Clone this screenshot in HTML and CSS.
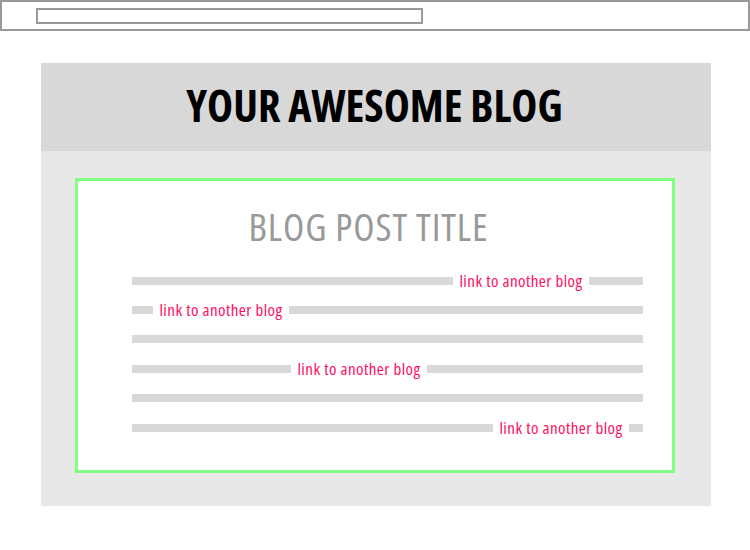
FILE: index.html
```html
<!DOCTYPE html>
<html>
<head>
<meta charset="utf-8">
<link rel="stylesheet" href="styles.css">
</head>
<body>
<div class="topbar"><div class="urlbox"></div></div>
<div class="page">
  <header class="masthead"><h1>YOUR AWESOME BLOG</h1></header>
  <main class="content">
    <article class="post">
      <h2>BLOG POST TITLE</h2>
      <div class="lines">
        <div class="row"><span class="seg" style="width:321px"></span><a class="link">link to another blog</a><span class="seg grow"></span></div>
        <div class="row"><span class="seg" style="width:21px"></span><a class="link">link to another blog</a><span class="seg grow"></span></div>
        <div class="row"><span class="seg grow"></span></div>
        <div class="row"><span class="seg" style="width:159px"></span><a class="link">link to another blog</a><span class="seg grow"></span></div>
        <div class="row"><span class="seg grow"></span></div>
        <div class="row"><span class="seg" style="width:361px"></span><a class="link">link to another blog</a><span class="seg grow"></span></div>
      </div>
    </article>
  </main>
</div>
</body>
</html>
```
FILE: styles.css
```css
* { box-sizing: border-box; }
html, body { margin: 0; padding: 0; background: #fff; }
body { width: 750px; height: 550px; overflow: hidden; font-family: "Open Sans", "Liberation Sans", sans-serif; }

.topbar {
  height: 31px;
  border: 2px solid #999;
  padding: 6px 0 0 34px;
}
.urlbox {
  width: 387px;
  height: 16px;
  border: 2px solid #999;
}

.page {
  margin: 32px 0 0 41px;
  width: 670px;
}
.masthead {
  background: #d8d8d8;
  height: 88px;
  display: flex;
  align-items: center;
  justify-content: center;
}
.masthead h1 {
  margin: 0;
  font-size: 44px;
  font-weight: 700;
  font-stretch: 75%;
  color: #000;
  line-height: 50px;
  padding-right: 3px;
  position: relative;
  top: -2px;
}
.content {
  background: #e8e8e8;
  height: 355px;
  padding: 27px 0 0 34px;
}
.post {
  width: 600px;
  height: 295px;
  background: #fff;
  border: 3px solid #80ff80;
  padding: 19px 0 0 54px;
}
.post h2 {
  margin: 0;
  width: 511px;
  padding-right: 38px;
  text-align: center;
  font-size: 39px;
  font-weight: 400;
  font-stretch: 75%;
  letter-spacing: 0.9px;
  color: #999;
  line-height: 52px;
}
.lines {
  margin-top: 14px;
  width: 511px;
  display: flex;
  flex-direction: column;
}
.row {
  height: 29.4px;
  display: flex;
  align-items: center;
}
.seg {
  height: 8px;
  background: #d8d8d8;
  flex: none;
}
.seg.grow { flex: 1; }
.link {
  margin: 0 6px;
  color: #ff0f5f;
  font-size: 17px;
  font-stretch: 75%;
  font-weight: 500;
  letter-spacing: 0.45px;
  line-height: 20px;
  white-space: nowrap;
  width: 124px;
  text-align: center;
  flex: none;
}
```
